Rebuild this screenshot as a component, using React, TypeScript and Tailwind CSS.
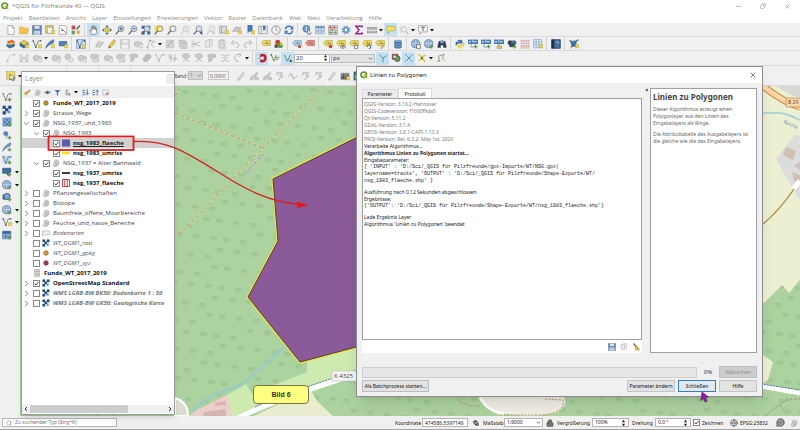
import React, { useState } from 'react';
import { Search, Lock, Globe, MessageCircleMore, Minus, X, Copy } from 'lucide-react';

const G = '#b0b0b0';

const badge = <path d="M10.5 9h5v5h-5z" fill="#f5dc5a" stroke="#b59a20" strokeWidth="0.8" />;
const greenPlus = <path d="M12 9v6M9 12h6" stroke="#5a9e3a" strokeWidth="2" />;
const lens = (fill: string, stroke = '#777') => (
  <>
    <circle cx="9.5" cy="6" r="4.6" fill={fill} stroke={stroke} strokeWidth="1.2" />
    <path d="M6 9.5 1 15" stroke={stroke === '#777' ? '#5a5a5a' : stroke} strokeWidth="1.8" />
  </>
);
const tag = (fill: string, stroke: string) => (
  <>
    <path d="M4 2.5h11v8H4L1 6.5z" fill={fill} stroke={stroke} strokeWidth="0.8" />
    <path d="M5 7.5q1.5-2.5 2 0M8.500 4v4h1.500V6M13 6q-2 0-1.500 2h1.500" fill="none" stroke="#666" strokeWidth="0.9" />
  </>
);
const blob = (
  <path d="M2 10q-1-5 3-6 3-1 5 1 4-1 5 2 0 3-4 3-2 0-3 2-3 3-6-2z" fill="#cdcdcd" stroke={G} />
);
const vee = (color: string) => (
  <>
    <path d="M2 3 6 13 10 3h4" fill="none" stroke={color} strokeWidth="1.3" />
    <circle cx="2" cy="3" r="1.4" fill={color} />
    <circle cx="6" cy="13" r="1.4" fill={color} />
    <circle cx="14" cy="3" r="1.3" fill={color} />
  </>
);
const globe = (
  <>
    <circle cx="7.5" cy="7.500" r="6.500" fill="#7ea6cf" stroke="#35557d" />
    <path d="M1 7.500h13M7.500 1v13M4 2.500q-2 5 0 10M11 2.500q2 5 0 10" fill="none" stroke="#e9f1f8" strokeWidth="0.9" />
  </>
);

const glyphs: Record<string, React.ReactNode> = {
  new: <path d="M3 1h7l3 3.500V15H3zM10 1v4h3" fill="#fff" stroke="#888" />,
  open: <path d="M1 3h5l1.500 2H14v2l1.500 0L13 14H1z" fill="#f6c04d" stroke="#d39a2a" strokeWidth="0.8" />,
  save: (
    <>
      <path d="M1 1h14v14H1z" fill="#5f87b1" stroke="#4d7093" />
      <path d="M4 1h8v5H4zM3 9h10v6H3z" fill="#dfe7ee" />
      <path d="M4 11h8M4 13h8" stroke="#8aa0b5" strokeWidth="0.8" />
    </>
  ),
  layout: (
    <>
      <path d="M1 1h12v12H1z" fill="#e9d36a" stroke="#8c8247" />
      <path d="M4 4h8v9H4z" fill="#fff" stroke="#8a8a8a" strokeWidth="0.8" />
      {badge}
    </>
  ),
  manager: (
    <>
      <path d="M2 1h9l3 3v11H2z" fill="#fff" stroke="#8a8a8a" />
      <path d="m5 5 8 8M5 9h4" stroke="#777" strokeWidth="1.500" />
    </>
  ),
  style: (
    <>
      <path d="M1 1h6v6H1z" fill="#c0504d" />
      <path d="M9 7 14 1" stroke="#444" strokeWidth="2" />
      <path d="M1 9h5v6H1z" fill="#5a9e5a" />
      <path d="M9 9h5v5H9z" fill="#e0a83a" />
    </>
  ),
  hand: (
    <path
      d="M4 15q-1-3-3-6 1-1.500 3 1V3q1-1.500 2 0v4-5.500q1-1 2 0V7 2.500q1-1 2 0V8 4.500q1-1 2 0V11q0 2-1.500 4z"
      fill="#fff" stroke="#555" strokeWidth="0.9"
    />
  ),
  panSel: (
    <>
      <path d="M8 0 11 3.500H5zM8 16l3-3.500H5zM0 8l3.500-3v6zM16 8l-3.500-3v6z" fill="#3c6898" />
      <path d="M5 5h6v6H5z" fill="#f0d640" stroke="#a8941e" />
    </>
  ),
  zoomIn: <>{lens('#d5e2f0')}<path d="M7 6h5M9.500 3.500v5" stroke="#2b5c94" strokeWidth="1.500" /></>,
  zoomOut: <>{lens('#d5e2f0')}<path d="M7 6h5" stroke="#2b5c94" strokeWidth="1.500" /></>,
  full: (
    <>
      <path d="M1 1h5v5H1zM10 1h5v5h-5zM1 10h5v5H1zM10 10h5v5h-5z" fill="#3c6898" />
      {lens('#c9dbee')}
    </>
  ),
  zoomSel: <><path d="M1 1h10v10H1z" fill="#f3e05a" />{lens('#f3e88a')}</>,
  zoomLayer: <><path d="M3 1h12v10H3z" fill="#ddd" />{lens('#f1f1f1')}</>,
  zoomNative: <>{lens('#e4e4e4', '#cacaca')}<path d="M12 10v5M15 10v5" stroke="#cacaca" /></>,
  zoomLast: <>{lens('#d5e2f0')}<path d="M15 9 10 12.500 15 16z" fill="#2b5c94" /></>,
  zoomNext: <>{lens('#e8e8e8', '#cacaca')}<path d="m10 9 5 3.500-5 3.500z" fill="#cacaca" /></>,
  mapView: <><path d="M1 2h11v11H1z" fill="#ddd" stroke="#8c8c8c" /><path d="M4 2v11" stroke="#8c8c8c" />{badge}</>,
  view3d: <><path d="M1 10 5 4h9l-2 6z" fill="#c9c9c9" stroke="#9c9c9c" />{badge}</>,
  bookmark: <><path d="M4 0h8v13l-4-3-4 3z" fill="#4679b0" />{badge}</>,
  bookmarks: <><path d="M1 2h14v12H1z" fill="#e9e9e9" stroke="#888" /><path d="M5 2v12" stroke="#888" /><path d="M8 1h4v8L10 7 8 9z" fill="#4679b0" /></>,
  clock: <><circle cx="8" cy="8" r="6.700" fill="#f2f2f2" stroke="#888" strokeWidth="1.300" /><path d="M8 3v5l3 2" fill="none" stroke="#666" /></>,
  refresh: (
    <>
      <path d="M2 7q1-5 6-5 3 0 5 2M14 9q-1 5-6 5-3 0-5-2" fill="none" stroke="#3f7cb8" strokeWidth="2.300" />
      <path d="M15 1v6H9zM1 15V9h6z" fill="#3f7cb8" />
    </>
  ),
  identify: <><circle cx="7" cy="6" r="5.500" fill="#6c98c5" stroke="#3c6898" /><path d="M7 5v4M7 2.500v1.500" stroke="#fff" strokeWidth="1.700" /><path d="m9 7 6 6-3 .3L13.500 16l-2-1-1-2L9 15z" fill="#fff" stroke="#555" strokeWidth="0.800" /></>,
  table: <><path d="M1 2h14v12H1z" fill="#dfeaf5" stroke="#7d9fc2" /><path d="M1 2h14v3H1z" fill="#5f8fc0" /><path d="M1 8h14M1 11h14M5.500 2v12M10 2v12" stroke="#7d9fc2" /></>,
  calc: <><path d="M1 1h14v14H1z" fill="#dcdcdc" stroke="#888" /><path d="M2 4h12M2 8h12M2 12h12" stroke="#777" /><path d="M4 2.500v3M10 2.500v3" stroke="#c33" strokeWidth="2" /><path d="M7 6.500v3M4 10.500v3M12 10.500v3" stroke="#5a9e3a" strokeWidth="2" /></>,
  gear: <><circle cx="8" cy="8" r="5.500" fill="none" stroke="#6c9ccc" strokeWidth="3.500" strokeDasharray="2.200 2.100" /><circle cx="8" cy="8" r="3.500" fill="#fff" stroke="#5b8fc6" strokeWidth="2.500" /></>,
  sigma: <path d="M13 4V2H3l5 6-5 6h10v-2.500" fill="none" stroke="#a3218e" strokeWidth="2.300" />,
  ruler: <><path d="M0 3h16v4H0zM0 9h16v4H0z" fill="#9a9a9a" /><path d="M2 4v2M5 4v2M8 4v2M11 4v2M14 4v2M2 11h12" stroke="#eee" /></>,
  tip: <path d="M3 2h10q2 0 2 2v3q0 2-2 2H7l-4 5V9Q1 9 1 7V4q0-2 2-2z" fill="#f4e663" stroke="#a99b34" />,
  greySearch: <><path d="M1 2h10v10H1z" fill="#ddd" /><circle cx="8" cy="7" r="4" fill="#eee" stroke="#bbb" /><path d="m11 10 4 5" stroke="#bbb" strokeWidth="2" /></>,
  text: <><path d="M1 1h14v10H6l-3 4v-4H1z" fill="#f5f5f5" stroke="#8e8e8e" /><path d="M5 3.500h6M8 3.500v6" stroke="#555" strokeWidth="1.400" /></>,

  sources: <><path d="m1 4 9-3 5 4-9 4z" fill="#e2673f" /><path d="m1 8 9-3 5 4-9 4z" fill="#e8c33c" /><path d="m1 7 5 3 8-3v5l-8 3-5-3z" fill="#3a6ea5" /></>,
  geopkg: <><path d="m1 6 7-4 7 4-7 4z" fill="#eac94a" stroke="#8f7a22" strokeWidth="0.800" /><path d="M1 6v5l7 4V10z" fill="#3c6898" /><path d="M15 6v5l-7 4V10z" fill="#53809f" />{badge}</>,
  shape: <>{vee('#666')}{badge}</>,
  shapeGreen: <>{vee('#777')}{greenPlus}</>,
  feather: <><path d="M1 15Q3 5 14 1q1 6-5 7Q5 10 1 15z" fill="#4c7db2" stroke="#2f5b8c" strokeWidth="0.800" />{badge}</>,
  featherGreen: <><path d="M1 15Q3 5 14 1q1 6-5 7Q5 10 1 15z" fill="#6f98c2" stroke="#4b739c" strokeWidth="0.800" />{greenPlus}</>,
  scratch: <><path d="M2 4h12v7H2z" fill="#4c86bd" stroke="#2f5b8c" />{badge}</>,
  virtual: <><path d="M1 1h14v14H1z" fill="#d3e2f0" stroke="#5585b5" />{vee('#3c6898')}{badge}</>,
  edits: <path d="m2 12 6-9 2 2-6 9zM7 13l6-9 2 2-6 8z" fill="#c9c9c9" stroke={G} strokeWidth="0.800" />,
  pencil: <><path d="m3 11 8-10 3 2.500-8 10z" fill="#f0c93c" stroke="#94761a" strokeWidth="0.800" /><path d="m3 11 3 2.500L2 15z" fill="#555" /></>,
  saveGrey: <><path d="M1 1h14v14H1z" fill="#d4d4d4" stroke="#bcbcbc" /><path d="M4 1h8v5H4zM3 9h10v6H3z" fill="#f1f1f1" /></>,
  blob: <>{blob}<path d="M10 9h5v5h-5z" fill="#eee" stroke={G} /></>,
  node: <><path d="M2 13 6 2l8 2-6 4 5 6" fill="none" stroke={G} strokeWidth="1.300" /><path d="M4.500 1h3v3h-3zM1 12h3v3H1z" fill={G} /></>,
  multi: <><path d="M2 2h12v12H2z" fill="#d4d4d4" stroke="#bbb" /><path d="m4 12 8-9" stroke={G} strokeWidth="2" /></>,
  trash: <path d="M2 2h9v3h3v10H5v-3H2zM5 6h9" fill="#cfcfcf" stroke={G} />,
  cut: <><path d="M15 4 5 9M15 12 5 7" stroke={G} strokeWidth="1.300" /><circle cx="3.500" cy="5.500" r="2" fill="none" stroke={G} /><circle cx="3.500" cy="10.500" r="2" fill="none" stroke={G} /></>,
  copy: <path d="M2 3h7v10H2zM6 1h7v10H9" fill="#eaeaea" stroke="#b5b5b5" />,
  paste: <path d="M3 2h10v13H3zM6 1h4v3H6zM5 7h6v6H5z" fill="#e4e4e4" stroke="#b5b5b5" />,
  undo: <path d="M6 2 2 6l4 4M2 6h7q5 0 5 4 0 3-4 4" fill="none" stroke={G} strokeWidth="1.400" />,
  redo: <path d="m10 2 4 4-4 4M14 6H7Q2 6 2 10q0 3 4 4" fill="none" stroke={G} strokeWidth="1.400" />,
  label: tag('#f4df4d', '#a08e1c'),
  diagram: <><circle cx="6" cy="5" r="4" fill="#d0392f" /><circle cx="10" cy="10" r="4.500" fill="#55a03c" /><path d="M10 10V5.500a4.500 4.500 0 0 1 4.500 4.500z" fill="#f0c93c" /><path d="M1 9h5v5H1z" fill="#444" /></>,
  labelBlue: <>{tag('#b8d1ec', '#5c85b0')}<circle cx="12" cy="12" r="2.500" fill="#c9443c" /></>,
  labelRed: tag('#ef8d84', '#b04038'),
  labelPin: <>{tag('#f4df4d', '#a08e1c')}<circle cx="12" cy="12" r="2.800" fill="#d0392f" /></>,
  labelEye: <>{tag('#f4df4d', '#a08e1c')}<ellipse cx="11" cy="12.500" rx="4" ry="2.300" fill="#fff" stroke="#445" /><circle cx="11" cy="12.500" r="1.200" fill="#235" /></>,
  labelMove: <>{tag('#f4df4d', '#a08e1c')}<path d="M9 10h5v5H9z" fill="#fff" stroke="#444" /></>,
  labelRot: <>{tag('#f4df4d', '#a08e1c')}<path d="M8 13a3 3 0 1 1 3 2.500" fill="none" stroke="#2f5b8c" strokeWidth="1.500" /></>,
  labelEdit: <>{tag('#f4df4d', '#a08e1c')}<path d="m9 15 4-6 2 1.500-4 5z" fill="#f0c93c" stroke="#777" strokeWidth="0.700" /></>,
  db: <><path d="M2 3v10q0 2 6 2t6-2V3z" fill="#44719f" /><ellipse cx="8" cy="3" rx="6" ry="2" fill="#7ea6cf" /><path d="M2 7q1 2 6 2t6-2M2 10.500q1 2 6 2t6-2" fill="none" stroke="#a9c3dd" /></>,
  globe: <>{globe}<path d="M9 9h6v6H9z" fill="#fff" stroke="#444" /></>,
  globePlus: <>{globe}{greenPlus}</>,
  binoc: <><path d="M3 3h4v3h2V3h4l2 8v3h-5v-4H6v4H1v-3z" fill="#2e3e50" /><circle cx="8" cy="4" r="3" fill="#7ea6cf" /></>,
  python: <><path d="M8 1q4 0 4 2.500V7H6Q3 7 3 10H1V6q0-2 3-2h4V3H4q0-2 4-2z" fill="#3a6ea5" /><path d="M8 15q-4 0-4-2.500V9h6q3 0 3-3h2v4q0 2-3 2H8v1h4q0 2-4 2z" fill="#f0cf45" /></>,
  html: <><path d="M0 1h16v7H0z" fill="#3f77ae" /><path d="M2 3v3M4 3v3M2 4.500h2M6 3h3M7.500 3v3M10 6V3l1.500 2L13 3v3" fill="none" stroke="#fff" strokeWidth="0.900" /><path d="M5 8v5h4" fill="none" stroke="#777" />{greenPlus}</>,
  htmlYel: <><path d="M0 1h16v7H0z" fill="#3f77ae" /><path d="M2 3v3M4 3v3M2 4.500h2M6 3h3M7.500 3v3M10 6V3l1.500 2L13 3v3" fill="none" stroke="#fff" strokeWidth="0.900" /><path d="M8 8v3" stroke="#777" /><path d="M5 11h7v4H5z" fill="#eac94a" stroke="#888" /></>,
  osm: <><circle cx="5" cy="6" r="4" fill="#33475e" /><circle cx="11" cy="6" r="4" fill="#4a6a8e" /><path d="M4 8h8v5H4z" fill="#33475e" />{greenPlus}</>,
  colorGrid: (
    <>
      <path d="M1 1h14v14H1z" fill="#f3dcdc" />
      <path d="M1 3h14M1 11h14" stroke="#e08c8c" strokeWidth="2" strokeDasharray="2 1" />
      <path d="M1 7h14" stroke="#8cb4e0" strokeWidth="2" strokeDasharray="2 1" />
      <path d="M1 14h14" stroke="#9ccf8c" strokeWidth="2" strokeDasharray="2 1" />
    </>
  ),
  grid: <><path d="M1 1h13v13H1z" fill="#eef4fa" stroke="#6c98c5" /><path d="M5 1v13M9.500 1v13M1 5h13M1 9.500h13" stroke="#6c98c5" />{badge}</>,
  book: <><path d="M1 1h14v14H1z" fill="#3c6898" stroke="#1f3854" /><path d="M1 1h4v14H1z" fill="#1f2f44" /><path d="M8 6q0-2 2-2t2 2q0 1.500-2 2.500M10 11v1.300" fill="none" stroke="#cfe0f2" strokeWidth="1.200" /></>,
  topo: <><path d="m2 3 11-1-2 10-7 1z" fill="#4c7db2" /><path d="m2 3 9 9M13 2 4 13" stroke="#2b4a69" /><circle cx="2" cy="3" r="1.500" fill="#777" /><circle cx="14" cy="2" r="1.500" fill="#777" /><circle cx="3" cy="14" r="1.500" fill="#d5b83c" />{badge}</>,

  arc: <><path d="M2 14Q2 3 14 3" fill="none" stroke="#c5c5c5" strokeWidth="1.300" /><path d="M1 12h3v3H1zM12 1h3v3h-3z" fill="#c5c5c5" /></>,
  tri: <path d="M2 2v12h12zM2 14 14 2v12" fill="#dcdcdc" stroke={G} />,
  ring: <><circle cx="6" cy="6" r="4.500" fill="#cdcdcd" stroke={G} /><circle cx="11" cy="11" r="3.500" fill="#e6e6e6" stroke={G} /></>,
  blobs: <><path d="M1 6q0-5 5-4l8 1q1 4-4 4l-6 2q-3 0-3-3z" fill="#cdcdcd" stroke={G} /><path d="M4 12q1-3 5-3h5v5H5z" fill="#dedede" stroke={G} /></>,
  hook: <path d="M1 3q7-3 13 0 1 5-4 4-2 0-2 4l-3 3q-4 0-2-5z" fill="#c4c4c4" stroke={G} />,
  pill: <path d="M2 12q-2-4 2-5 1-5 7-5 5 2 3 6-3 1-4 4-5 4-8 0z" fill="#bdbdbd" stroke={G} />,
  split: <path d="M2 2v6h5M5 2v12M11 2v12M8 9h7" fill="none" stroke={G} strokeWidth="1.500" />,
  scissor: <><ellipse cx="8" cy="4.500" rx="6" ry="3.500" fill="#ccc" stroke={G} /><path d="m3 14 8-6M13 14 5 8" stroke={G} strokeWidth="1.400" /></>,
  merge: <path d="M1 3h5l2 3 2-3h5M1 13h5l2-3 2 3h5M3 8h10" fill="none" stroke="#c0c0c0" strokeWidth="1.600" />,
  rotate: <path d="M12 3Q3 0 3 8q0 6 6 6M9 1l4 2-3 3" fill="none" stroke={G} strokeWidth="1.400" />,
  veeGrey: <>{vee('#b5b5b5')}</>,
  magnet: (
    <>
      <path d="M3 5.500 8.500 3q5 0 5 5t-5 5L4 12" fill="none" stroke="#c32026" strokeWidth="4" />
      <path d="m2 6.500 2.500-3M3 13.500l1-3" stroke="#f2f2f2" strokeWidth="2.500" />
      <path d="M1 8.500h3" stroke="#777" />
    </>
  ),
  snapV: <><path d="M2 3 6 13 10 3M9 7h6M9 10h5" fill="none" stroke="#6c8f5c" strokeWidth="1.500" /><circle cx="2" cy="3" r="1.700" fill="#6c8f5c" /></>,
  snapBlue: <><path d="M2 3 7 13 12 3" fill="none" stroke="#4b8e63" strokeWidth="1.500" /><path d="m12 10 3 4h-5z" fill="#333" /></>,
  topoEdit: <path d="M2 3 8 8l6-4M8 8v7" fill="none" stroke="#5e9c70" strokeWidth="1.600" />,
  overlap: <><path d="M2 2h9v8H2z" fill="#c04a4a" stroke="#444" /><circle cx="10" cy="9" r="4.500" fill="#6a9a5a" stroke="#333" /><circle cx="6" cy="6" r="2" fill="#eee" /></>,
  extent: <><path d="M2 5q5-5 9 0t2 8q-6 2-9-3z" fill="#444" /><path d="m3 3 10 10M13 3 4 12M3 8h10" stroke="#ddd" strokeWidth="0.900" /></>,
  cross: <path d="m2 2 12 12M14 2 2 14" stroke="#59977a" strokeWidth="1.500" />,
  crossYel: <><path d="M2 2q5 3 6 6 2-4 6-5M8 8l5 6M8 8l-5 5" fill="none" stroke="#dcc22e" strokeWidth="2.200" /><circle cx="8" cy="8" r="1.500" fill="#444" /></>,
  trace: <path d="M2 13h4L4 5l9-3-3 6 4 4" fill="none" stroke="#7ca06a" strokeWidth="1.500" />,
  select: <><path d="M1 1h13v13H1z" fill="#f4e24c" stroke="#777" strokeDasharray="2 1" /><path d="m6 5 9 6-4 .500 2 4-2 .500-2-4-3 2z" fill="#fff" stroke="#333" strokeWidth="0.900" /></>,
  pen: <path d="m2 13 9-11 3 2-9 11zM2 14h4" fill="#d6d6d6" stroke="#bcbcbc" />,
  brush: <path d="M2 14q0-5 4-6l7-6 1 2-5 7q-2 4-7 3zM10 10h5v4h-5z" fill="#cbcbcb" stroke={G} />,
  wave: <path d="M1 9Q4 1 7 8t8-1M5 3l4 11" fill="none" stroke={G} strokeWidth="1.400" />,
  sweep: <path d="M3 3h9l-5 5h6l-8 6M3 3v4" fill="none" stroke={G} strokeWidth="1.600" />,
  hist: <><path d="M1 3h14v11H1z" fill="#8c8c8c" /><path d="M3 13V8M6 13V5M9 13V9M12 13V6" stroke="#3f3f3f" strokeWidth="1.600" />{badge}</>,
  histGreen: <><path d="M1 1h14v14H1z" fill="#2e6e5c" /><path d="M4 13V6M8 13V3M12 13V8" stroke="#7bc2a2" strokeWidth="1.500" /></>,

  raster: <><path d="M1 1h14v14H1z" fill="#d7e3ee" /><path d="M1 1h5v5H1zM10 1h5v5h-5zM5 5h5v5H5zM1 10h5v5H1z" fill="#27496d" /><path d="M9 9h4v4H9z" fill="#6690ba" /></>,
  mesh: <><path d="M1 1h14v14H1z" fill="#4c7db2" /><path d="m1 8 7-7 7 7-7 7zM1 1l14 14M15 1 1 15" fill="none" stroke="#b9d0e6" />{greenPlus}</>,
  comma: <><path d="M4 2q6-1 6 4 0 5-6 8 3-3 3-5-5 1-5-3 0-3 2-4z" fill="#5b89b8" />{greenPlus}</>,
  spatial: <><path d="M1 1h12v12H1z" fill="#c3d5e6" />{vee('#5780a8')}{greenPlus}</>,
  post: <><path d="M1 2h13v7l-4 1v4L7 10H1z" fill="#3f6e9e" stroke="#294d72" />{greenPlus}</>,
  ora: <><path d="M1 4h12v8H1z" fill="#35587c" /><circle cx="8" cy="7" r="5" fill="#7ea6cf" stroke="#27496d" />{greenPlus}</>,
  tableBlue: <><path d="M1 2h13v12H1z" fill="#8fb3d6" stroke="#3c6898" /><path d="M1 2h13v4H1z" fill="#3c6898" /><path d="M1 10h13M6 6v8" stroke="#3c6898" />{greenPlus}</>,

  group: <path d="M5 4q3-4 5-1 4 0 4 4t-3 7l-7 1q-3-2-1-4 2-2 2-7zM8 5v8M11 6l-2 7" fill="#d9d9d9" stroke="#8a8a8a" />,
  eye: <><path d="M1 8q7-7 14 0-7 6-14 0z" fill="#bcd" stroke="#345" /><circle cx="8" cy="8" r="2.500" fill="#234" /></>,
  filter: <path d="M1 2h14L9.500 8v7h-3V8z" fill="#4679b0" />,
  expr: <><path d="M10 3Q4 1 5 5q0 3 4 3-6 0-5 4 1 3 6 1" fill="none" stroke="#9b5a9b" strokeWidth="1.700" />{greenPlus}</>,
  expand: <path d="M1 3h6M1 8h6M1 13h6M12 1v11M9 9l3 4 3-4" fill="none" stroke="#3c6898" strokeWidth="1.900" />,
  collapse: <path d="M1 3h6M1 8h6M1 13h6M12 15V3M9 6l3-4 3 4" fill="none" stroke="#3c6898" strokeWidth="1.900" />,
  remove: <><path d="M2 2h12v12H2z" fill="#eee" stroke="#999" /><path d="M9 11h6" stroke="#c33" strokeWidth="2.500" /></>,
  paint: <><path d="m8 8 6-6" stroke="#8a5a2c" strokeWidth="2.400" /><path d="M1 9q4-4 8-2 1 4-4 7-3-1-4-5z" fill="#e6b53c" stroke="#a97b1a" /></>,
  broom: <><path d="M3 1 8 7" stroke="#8a5a2c" strokeWidth="2.400" /><path d="M6 8q3-3 5-1l4 7H8z" fill="#e6b53c" stroke="#a97b1a" /></>,
  doc: <path d="M3 1h10v14H3zM6 1v14M10 1v14M3 5h10M3 10h10" fill="#e4e4e4" stroke="#999" />,
  pointOrange: <circle cx="8" cy="8" r="4.500" fill="#e39a2d" stroke="#7c5312" strokeWidth="1.300" />,
  pointOlive: <circle cx="8" cy="8" r="4.500" fill="#c59a33" stroke="#6b5317" strokeWidth="1.300" />,
  pointRed: <circle cx="8" cy="8" r="4.500" fill="#a0414c" stroke="#5c2129" strokeWidth="1.300" />,
  fillBlue: <path d="M0 1h16v14H0z" fill="#5c59ae" />,
  lineYellow: <path d="M0 8h16" stroke="#f6e312" strokeWidth="5" />,
  lineBlack: <path d="M0 8h16" stroke="#222" strokeWidth="3.500" />,
  fillRed: <path d="M1 1h14v14H1zM5.500 1v14M10.500 1v14" fill="#fff" stroke="#b3262e" strokeWidth="1.700" />,
  polyGrey: <path d="M1 4h14v7H7l-3 3H1z" fill="#eee" stroke="#999" />,
};

const Glyph = ({ name, className = 'size-[10px]' }: { name: string; className?: string }) => (
  <svg viewBox="0 0 16 16" fill="none" aria-hidden="true" className={`shrink-0 ${className}`}>
    {glyphs[name]}
  </svg>
);

const Caret = () => (
  <svg viewBox="0 0 6 6" className="w-[6px] h-[6px] shrink-0" aria-hidden="true">
    <path d="M1 2h4L3 4.500z" fill="#111" />
  </svg>
);

const Sep = () => <span className="w-[5px] self-stretch shrink-0 flex justify-center"><span className="w-px bg-[#d4d4d4]" /></span>;

// "|" is a separator, "v" a drop-down caret, a leading "*" marks a pressed tool
const Tools = ({ items }: { items: string[] }) => (
  <>
    {items.map((item, index) => {
      if (item === '|') return <Sep key={index} />;
      if (item === 'v') return <Caret key={index} />;
      const active = item.startsWith('*');
      const name = item.replace('*', '');
      return (
        <button
          key={index}
          type="button"
          aria-label={name}
          className={`w-[13px] h-[13px] shrink-0 flex items-center justify-center ${active ? 'bg-[#c4e0f5]' : ''}`}
        >
          <Glyph name={name} />
        </button>
      );
    })}
  </>
);

const fileTools = ['new', 'open', 'save', 'layout', 'manager', 'style', '|', '*hand', 'panSel', 'zoomIn', 'zoomOut', 'full', 'zoomSel', 'zoomLayer', 'zoomNative', 'zoomLast', 'zoomNext', 'mapView', 'view3d', 'bookmark', 'bookmarks', 'clock', 'refresh', '|', 'identify', 'table', 'calc', 'gear', 'sigma', 'ruler', 'v', '*tip', 'greySearch', 'v', 'text', 'v'];
const editTools = ['sources', 'geopkg', 'shape', 'feather', 'scratch', '|', 'virtual', '|', 'edits', 'pencil', 'saveGrey', 'blob', 'node', 'v', 'multi', 'trash', 'cut', 'copy', 'paste', 'undo', 'redo', '|', 'label', 'diagram', '|', 'labelBlue', 'labelRed', '|', 'labelPin', 'labelEye', 'labelMove', 'labelRot', 'labelEdit', '|', 'db', '|', 'globe', 'globePlus', 'binoc', '|', 'python', 'html', 'html', 'htmlYel', 'osm', 'colorGrid', 'grid', '|', 'book', '|', 'topo'];
const digitizeTools = ['arc', 'tri', 'blob', 'v', 'blob', 'ring', 'blob', 'blobs', 'blob', 'blobs', 'hook', 'pill', 'veeGrey', 'split', 'scissor', 'scissor', 'hook', 'merge', 'rotate', 'v', '|'];
const sideTools = ['shapeGreen', 'raster', 'mesh', 'comma', 'featherGreen', 'spatial', 'post', 'globePlus', 'ora', 'globePlus', 'shape', 'tableBlue'];
const sideCarets = [6, 7, 9, 10];

const menu = ['Projekt', 'Bearbeiten', 'Ansicht', 'Layer', 'Einstellungen', 'Erweiterungen', 'Vektor', 'Raster', 'Datenbank', 'Web', 'Netz', 'Verarbeitung', 'Hilfe'];

const Logo = ({ className }: { className: string }) => (
  <svg viewBox="0 0 16 16" className={className} aria-hidden="true">
    <circle cx="7.500" cy="7.500" r="5.500" fill="none" stroke="#5f9a2b" strokeWidth="3.400" />
    <path d="m8 8 3 0 4.500 4.500-2 2.500L8 10.500z" fill="#7ab52f" stroke="#fff" strokeWidth="0.500" />
    <path d="M7 7h3v3H7z" fill="#e8a93a" />
  </svg>
);

const CheckBox = ({ checked, label, id }: { checked: boolean; label: string; id?: string }) => {
  const [on, setOn] = useState(checked);
  return (
    <span className="grid size-[7px] shrink-0">
      <input
        id={id}
        type="checkbox"
        aria-label={id ? undefined : label}
        checked={on}
        onChange={() => setOn(!on)}
        className="col-start-1 row-start-1 appearance-none size-[7px] border border-[#888] bg-white"
      />
      {on && (
        <svg viewBox="0 0 7 7" className="col-start-1 row-start-1 size-[7px] pointer-events-none" aria-hidden="true">
          <path d="M1.700 3.500 3 5l2.500-3" fill="none" stroke="#333" strokeWidth="0.900" />
        </svg>
      )}
    </span>
  );
};

type Layer = {
  name: string;
  icon: string;
  level: number;
  open?: boolean;
  checked?: boolean;
  look?: 'bold' | 'italic' | 'boldItalic' | 'selected';
};

const layers: Layer[] = [
  { name: 'Funde_WT_2017_2019', icon: 'pointOlive', level: 0, checked: true, look: 'bold' },
  { name: 'Strasse_Wege', icon: 'group', level: 0, open: false, checked: true },
  { name: 'NSG_1937_und_1983', icon: 'group', level: 0, open: true, checked: true },
  { name: 'NSG_1983', icon: 'group', level: 1, open: true, checked: true },
  { name: 'nsg_1983_flaeche', icon: 'fillBlue', level: 2, checked: true, look: 'selected' },
  { name: 'nsg_1983_umriss', icon: 'lineYellow', level: 2, checked: true, look: 'bold' },
  { name: 'NSG_1937 = Alter Bannwald', icon: 'group', level: 1, open: true, checked: true },
  { name: 'nsg_1937_umriss', icon: 'lineBlack', level: 2, checked: true, look: 'bold' },
  { name: 'nsg_1937_flaeche', icon: 'fillRed', level: 2, checked: true, look: 'bold' },
  { name: 'Pflanzengesellschaften', icon: 'group', level: 0, open: false, checked: false },
  { name: 'Biotope', icon: 'group', level: 0, open: false, checked: false },
  { name: 'Baumfreie_offene_Moorbereiche', icon: 'group', level: 0, open: false, checked: false },
  { name: 'Feuchte_und_nasse_Bereiche', icon: 'group', level: 0, open: false, checked: false },
  { name: 'Bodenarten', icon: 'polyGrey', level: 0, open: false, checked: false, look: 'italic' },
  { name: 'WT_DGM1_rast', icon: 'raster', level: 0, checked: false, look: 'italic' },
  { name: 'WT_DGM1_gpkg', icon: 'pointOrange', level: 0, checked: false, look: 'italic' },
  { name: 'WT_DGM1_xyz', icon: 'pointRed', level: 0, checked: false, look: 'italic' },
  { name: 'Funde_WT_2017_2019', icon: 'doc', level: 0, look: 'bold' },
  { name: 'OpenStreetMap Standard', icon: 'raster', level: 0, open: false, checked: true, look: 'bold' },
  { name: 'WMS LGRB-BW BK50: Bodenkarte 1 : 50', icon: 'raster', level: 0, open: false, checked: false, look: 'boldItalic' },
  { name: 'WMS LGRB-BW GK50: Geologische Karte', icon: 'raster', level: 0, open: false, checked: false, look: 'boldItalic' },
];

const looks = {
  plain: 'text-[#444]',
  bold: 'font-bold text-[#111]',
  selected: 'font-bold text-[#222] underline',
  italic: 'italic text-[#555]',
  boldItalic: 'italic font-bold text-[#777]',
};
const indents = ['pl-0', 'pl-[10px]', 'pl-[20px]'];

const LayerPanel = () => (
  <section className="absolute top-[71px] left-[21px] bottom-[15px] w-[154px] flex flex-col bg-white border border-[#9a9a9a] shadow-md">
    <header className="h-[14px] shrink-0 flex items-center justify-between">
      <h2 className="pl-[3px] text-[7px] leading-[10px] text-[#888]">Layer</h2>
      <button type="button" aria-label="Panel" className="w-[8px] h-[10px] bg-[#ececec]" />
    </header>
    <div className="h-[12px] shrink-0 flex items-center gap-[2px] pl-px bg-[#f0f0f0]">
      {['paint', 'group', 'eye', 'filter', 'expr', 'v', 'expand', 'collapse', 'remove'].map((name) =>
        name === 'v' ? <Caret key={name} /> : (
          <button key={name} type="button" aria-label={name} className="w-[8px] h-[8px] flex items-center justify-center">
            <Glyph name={name} className="size-[7px]" />
          </button>
        )
      )}
    </div>
    <ul className="flex-1 min-h-0 overflow-hidden text-[6px] leading-[10px]">
      {layers.map((layer, index) => (
        <li
          key={index}
          className={`h-[10px] flex items-center ${indents[layer.level]} ${layer.look === 'selected' ? 'bg-[#d2d2d2]' : ''}`}
        >
          <span className="w-[11px] shrink-0 pl-[2px]">
            {layer.open !== undefined && (
              <svg viewBox="0 0 6 6" className="size-[5px]" aria-hidden="true">
                <path d={layer.open ? 'M0 1.500 3 4.500 6 1.500' : 'M1.500 0 4.500 3 1.500 6'} fill="none" stroke="#666" strokeWidth="1" />
              </svg>
            )}
          </span>
          {layer.checked !== undefined && (
            <span className="w-[9px] shrink-0"><CheckBox checked={layer.checked} label={layer.name} /></span>
          )}
          <Glyph name={layer.icon} className="size-[8px]" />
          <span className={`pl-[3px] whitespace-nowrap ${looks[layer.look ?? 'plain']}`}>{layer.name}</span>
        </li>
      ))}
    </ul>
    <div className="h-[8px] mb-px shrink-0 flex items-center bg-[#f0f0f0]">
      <svg viewBox="0 0 8 8" className="size-[8px]" aria-hidden="true"><path d="M5 2 3 4l2 2" fill="none" stroke="#333" /></svg>
      <span className="flex-1 flex h-full"><span className="w-[72%] bg-[#cdcdcd]" /></span>
      <svg viewBox="0 0 8 8" className="size-[8px]" aria-hidden="true"><path d="m3 2 2 2-2 2" fill="none" stroke="#333" /></svg>
    </div>
  </section>
);

// woodland symbols, scattered on a loose grid
const trees = Array.from({ length: 22 * 50 }, (_, i) => {
  const row = Math.floor(i / 50);
  const col = i % 50;
  return { x: 22 + col * 16 + ((row * 7) % 13) + ((col * 5) % 4), y: 91 + row * 16 + ((col * 11 + row * 3) % 9) };
});

const MapCanvas = () => (
  <svg viewBox="20 86 780 330" preserveAspectRatio="xMinYMin slice" className="flex-1 min-w-0 h-full" aria-label="Karte">
    <rect x="20" y="86" width="780" height="330" fill="#acd29f" />
    <g stroke="#92bb8c" strokeWidth="0.800" fill="none">
      {trees.map((t, i) => (
        <path key={i} d={`M${t.x} ${t.y}q-2-.5-1.500-2t2-.5 0 3l-1 1M${t.x + 3} ${t.y}q-2-.5-1.500-2t2-.5 0 3l-1 1`} />
      ))}
    </g>

    <path d="M360 347 307 362v10l-55 22-6-10-19 11-5 21h20l118-41z" fill="#cdebb0" />
    <path d="m227 395-28 14-10 7h43z" fill="#eccfcb" />
    <path d="m215 403 10-2 1 4-11 1zM204 412l22-3v7h-23z" fill="#d6b5b0" />
    <path d="m254 416 56-27 7 12 16 15z" fill="#e9edcd" />
    <path d="M175 398q13 4 13 18h-13z" fill="#dcdcd0" stroke="#fff" strokeWidth="2" />
    <path d="M191 411q14-12 30-19 20-4 35-20l30-26" fill="none" stroke="#9dcdc0" strokeWidth="3" />
    <path d="M238 418q40-20 122-45" fill="none" stroke="#fff" strokeWidth="5" />
    <path d="M255 407q20-10 105-38" fill="none" stroke="#4c6ca8" strokeWidth="1" strokeDasharray="2 1" />

    <g fill="none">
      <path d="m324 86-61 62-75 78q-6 6-13 9M175 113l88 35M175 96l6-10" stroke="#d6dcae" strokeWidth="1.500" />
      <path d="m324 86-61 62-75 78q-6 6-13 9M175 113l88 35M175 96l6-10" stroke="#b0985a" strokeWidth="1" strokeDasharray="4 2" />
    </g>
    <text x="247" y="174" transform="rotate(-47 247 174)" fontSize="5" fill="#777" stroke="#cfe0c4" strokeWidth="1" paintOrder="stroke">Feenstraße</text>

    <path d="m420 106-147 73 5 62-30 56 52 65 120-32z" fill="#8b5a99" stroke="#f0ea3c" strokeWidth="3" />
    <path d="m420 106-147 73 5 62-30 56 52 65 120-32z" fill="#8b5a99" stroke="#5a3c2c" strokeWidth="1" />

    <rect x="332" y="371" width="26" height="10" fill="#f5f5f5" stroke="#bbb" strokeWidth="0.600" />
    <text x="334" y="378" fontSize="6" fill="#444">K 4325</text>

    <path d="M480 397q10 12 25 17 30 4 50-1 14-6 9-16z" fill="#f0ede4" />
    <path d="M480 397q6 13 24 17" fill="none" stroke="#fff" strokeWidth="3" />
    <path d="M458 400q10 7 22 6M500 415h38q28-1 25-15l-20-1" fill="none" stroke="#b0985a" strokeDasharray="2 1.500" />

    <path d="M763 86h37v194l-11 13-7-8-19 19z" fill="#ecefd2" />
    <path d="M763 86q20 16 37 21" fill="none" stroke="#c4873c" strokeWidth="7" />
    <path d="M763 86q20 16 37 21" fill="none" stroke="#fbd6a4" strokeWidth="5" />
    <path d="M776 86h24v12q-12-3-24-12z" fill="#d8d8d4" />
    <path d="M763 113h18q10 2 19 7" fill="none" stroke="#98cfdb" strokeWidth="1.500" />
    <text x="783" y="123" transform="rotate(23 783 123)" fontSize="5" fill="#5c86b5">Reiche</text>
    <path d="m795 135 5 1v64l-6-9-18-32z" fill="#dcdcdc" />
    <path d="m786 147 10 4-3 9-10-5zM794 166l6-4v8zM792 172l8 3v9l-6-4z" fill="#cfbfb5" />
    <path d="m800 181-7 8" stroke="#fff" strokeWidth="5" />
    <path d="M794 189q-15 22-31 35" fill="none" stroke="#a8883a" strokeWidth="1.300" />
    <rect x="786" y="98" width="20" height="9" rx="1" fill="#f5d8a8" stroke="#a8793c" strokeWidth="0.600" />
    <text x="788" y="104" fontSize="5" fill="#5c4420">B 29</text>
    <path d="m763 355 10 7-5 18-5 3z" fill="#ecefd2" />
    <path d="m755 385 45 8" stroke="#fff" strokeWidth="5" />
    <path d="m755 383 45 7" stroke="#4c6ca8" strokeDasharray="2 1" />
    <path d="m765 416 18-14 9-3M780 405l8 11M785 399h15" fill="none" stroke="#9b9a70" strokeDasharray="3 1.500" />
  </svg>
);

const versions = ['QGIS-Version: 3.16.2-Hannover', 'QGIS-Codeversion: f1660f9da5', 'Qt-Version: 5.11.2', 'GDAL-Version: 3.1.4', 'GEOS-Version: 3.8.1-CAPI-1.13.3', 'PROJ-Version: Rel. 6.3.2, May 1st, 2020'];

const pushButton = 'h-[12px] shrink-0 border text-[5px] leading-[10px] whitespace-nowrap';

const AlgorithmDialog = () => (
  <section
    role="dialog"
    aria-label="Linien zu Polygonen"
    className="absolute top-[66px] left-[356px] right-[37px] bottom-[33px] flex flex-col bg-[#f0f0f0] border border-[#8c8c8c] shadow-lg font-['Noto_Sans',sans-serif]"
  >
    <header className="h-[16px] shrink-0 flex items-center bg-white pl-[3px] pr-[5px]">
      <Logo className="size-[8px]" />
      <h2 className="pl-[2px] flex-1 text-[6px] leading-[10px] text-[#222]">Linien zu Polygonen</h2>
      <button type="button" aria-label="Fenster zu"><X className="size-[8px]" strokeWidth={1.5} /></button>
    </header>
    <div className="flex-1 min-h-0 flex pt-[5px] px-[5px]">
      <div className="flex-1 min-w-0 flex flex-col">
        <div role="tablist" className="h-[10px] shrink-0 flex items-end text-[5px] leading-[8px] text-[#222]">
          <button role="tab" aria-selected="false" type="button" className="w-[36px] h-[9px] border border-b-0 border-[#dcdcdc] bg-[#ececec]">Parameter</button>
          <button role="tab" aria-selected="true" type="button" className="w-[34px] h-[10px] border border-b-0 border-[#dcdcdc] bg-white">Protokoll</button>
        </div>
        <div className="flex-1 min-h-0 overflow-hidden border border-[#a0a0a0] bg-white pt-[2px] pl-px text-[5px] leading-[7px] text-[#222]">
          {versions.map((line) => <p key={line} className="text-[#7b7b7b]">{line}</p>)}
          <p>Verarbeite Algorithmus...</p>
          <p className="font-bold">Algorithmus Linien zu Polygonen startet...</p>
          <p>Eingabeparameter:</p>
          <div className="font-['Liberation_Mono',monospace] whitespace-nowrap">
            <p>{"{ 'INPUT' : 'D:/Sci/_QGIS für Pilzfreunde/gpx-Importe/WT/NSG.gpx|"}</p>
            <p>{"layername=tracks', 'OUTPUT' : 'D:/Sci/_QGIS für Pilzfreunde/Shape-Exporte/WT/"}</p>
            <p>{"nsg_1983_flaeche.shp' }"}</p>
          </div>
          <p className="pt-1">Ausführung nach 0.12 Sekunden abgeschlossen</p>
          <p>Ergebnisse:</p>
          <p className="font-['Liberation_Mono',monospace] whitespace-nowrap">{"{'OUTPUT': 'D:/Sci/_QGIS für Pilzfreunde/Shape-Exporte/WT/nsg_1983_flaeche.shp'}"}</p>
          <p className="pt-1">Lade Ergebnis Layer</p>
          <p>Algorithmus 'Linien zu Polygonen' beendet</p>
        </div>
        <div className="h-[13px] shrink-0 flex items-center justify-end gap-[4px] pr-[2px] bg-white">
          <button type="button" aria-label="Protokoll speichern"><Glyph name="save" className="size-[8px]" /></button>
          <button type="button" aria-label="Protokoll kopieren"><Glyph name="copy" className="size-[8px]" /></button>
          <button type="button" aria-label="Protokoll leeren"><Glyph name="broom" className="size-[8px]" /></button>
        </div>
      </div>
      <svg viewBox="0 0 8 8" className="size-[8px] shrink-0" aria-hidden="true"><path d="m5.500 .5v3L3.500 2z" fill="#111" /></svg>
      <aside className="w-[107px] shrink-0 border border-[#a0a0a0] bg-white px-[2px] pt-[3px] text-[#666]">
        <h3 className="font-bold text-[8px] leading-[10px] text-[#444] whitespace-nowrap">Linien zu Polygonen</h3>
        <p className="pt-[4px] text-[5px] leading-[7px]">Dieser Algorithmus erzeugt einen<br />Polygonlayer aus den Linien des<br />Eingabelayers als Ringe.</p>
        <p className="pt-[4px] text-[5px] leading-[7px]">Die Attributtabelle des Ausgabelayers ist<br />die gleiche wie die des Eingabelayers.</p>
      </aside>
    </div>
    <footer className="shrink-0 px-[5px] pt-[13px] pb-[4px] flex flex-col gap-[2px]">
      <div className="flex items-center gap-[2px]">
        <div role="progressbar" aria-valuenow={0} aria-label="Fortschritt" className="flex-1 h-[11px] border border-[#cfcfcf] bg-[#e6e6e6]" />
        <span className="w-[18px] text-center text-[6px] leading-[8px] text-[#333]">0%</span>
        <button type="button" disabled className={`${pushButton} w-[38px] border-[#bfbfbf] bg-[#cccccc] text-[#8c8c8c]`}>Abbrechen</button>
      </div>
      <div className="flex items-center gap-[2px] text-[#111]">
        <button type="button" className={`${pushButton} w-[67px] border-[#bcbcbc] bg-[#e3e3e3]`}>Als Batchprozess starten...</button>
        <span className="flex-1" />
        <button type="button" className={`${pushButton} w-[48px] border-[#c4c4c4] bg-[#e3e3e3]`}>Parameter ändern</button>
        <button type="button" className={`${pushButton} w-[38px] mx-px border-[#2f7fc8] bg-[#e3e8ee]`}>Schließen</button>
        <button type="button" className={`${pushButton} w-[38px] border-[#c4c4c4] bg-[#e3e3e3]`}>Hilfe</button>
      </div>
    </footer>
  </section>
);

const Spin = () => (
  <svg viewBox="0 0 5 10" className="w-[5px] h-[8px] shrink-0" aria-hidden="true">
    <path d="M.5 4 2.500 1 4.500 4zM.5 6l2 3 2-3z" fill="#222" />
  </svg>
);

const field = 'h-[9px] border border-[#b5b5b5] bg-white px-[2px] text-[5px] leading-[7px] text-[#222]';

const StatusBar = () => (
  <footer className="h-[14px] shrink-0 flex items-center bg-[#f0f0f0] border-b border-[#a5a5a5] pl-[2px] text-[5px] leading-[8px] text-[#222] whitespace-nowrap font-['Noto_Sans',sans-serif]">
    <label className="w-[115px] h-[9px] flex items-center border border-[#b5b5b5] bg-white pl-[3px]">
      <Search className="size-[6px] text-[#777]" />
      <input aria-label="Suche" placeholder="Zu suchender Typ (Strg+K)" className="flex-1 min-w-0 pl-[3px] text-[5px] leading-[7px] placeholder:text-[#777]" />
    </label>
    <span className="flex-1" />
    <label htmlFor="coord" className="w-[27px]">Koordinate</label>
    <input id="coord" defaultValue="474586,5397146" className={`${field} w-[46px]`} />
    <span className="w-[15px] flex justify-center"><Glyph name="extent" className="size-[8px]" /></span>
    <label htmlFor="scale" className="w-[21px]">Maßstab</label>
    <span className="w-[39px] grid items-center">
      <select id="scale" className={`${field} appearance-none col-start-1 row-start-1`}><option>1:6000</option></select>
      <svg viewBox="0 0 6 6" className="size-[5px] mr-[2px] justify-self-end col-start-1 row-start-1 pointer-events-none" aria-hidden="true"><path d="m1 2 2 2 2-2" fill="none" stroke="#555" /></svg>
    </span>
    <span className="w-[14px] flex justify-center"><Lock className="size-[8px] text-[#444]" fill="#777" /></span>
    <label htmlFor="magnifier" className="w-[35px]">Vergrößerung</label>
    <span className={`${field} w-[37px] flex items-center`}><input id="magnifier" defaultValue="100%" className="flex-1 min-w-0" /><Spin /></span>
    <label htmlFor="rotation" className="w-[26px] pl-[3px]">Drehung</label>
    <span className={`${field} w-[36px] flex items-center`}><input id="rotation" defaultValue="0,0 °" className="flex-1 min-w-0" /><Spin /></span>
    <span className="pl-[2px] pr-[2px]"><CheckBox id="render" checked label="Zeichnen" /></span>
    <label htmlFor="render" className="w-[28px]">Zeichnen</label>
    <Globe className="size-[8px] text-[#555]" />
    <span className="w-[38px] pl-[2px]">EPSG:25832</span>
    <MessageCircleMore className="size-[9px] text-[#444]" fill="#999" />
    <span className="w-[13px] mr-[2px] flex justify-end"><Glyph name="group" className="size-[8px]" /></span>
  </footer>
);

const toolbar = 'shrink-0 flex items-center pl-[4px] border-b border-[#dadada] overflow-hidden';

const App = () => {
  return (
    <div className="relative h-screen overflow-hidden flex flex-col bg-[#f0f0f0] font-['Open_Sans','Noto_Sans',sans-serif]">
      <header className="h-[12px] shrink-0 flex items-center bg-white pl-px pr-[9px] text-[#888]">
        <Logo className="size-[8px]" />
        <h1 className="flex-1 pl-[3px] font-['Noto_Sans',sans-serif] text-[6px] leading-[10px]">*QGIS für Pilzfreunde 40 — QGIS</h1>
        <div className="flex items-center gap-[18px]">
          <button type="button" aria-label="Minimieren"><Minus className="size-[7px]" /></button>
          <button type="button" aria-label="Verkleinern"><Copy className="size-[6px] -scale-x-100" /></button>
          <button type="button" aria-label="Beenden"><X className="size-[7px]" /></button>
        </div>
      </header>
      <nav className="h-[11px] shrink-0 flex items-center gap-[6px] bg-white pl-[3px] text-[6px] leading-[10px] text-[#8a8a8a]">
        {menu.map((entry) => <button key={entry} type="button">{entry}</button>)}
      </nav>

      <div className={`${toolbar} h-[14px]`}><Tools items={fileTools} /></div>
      <div className={`${toolbar} h-[14px]`}><Tools items={editTools} /></div>
      <div className={`${toolbar} h-[15px]`}>
        <Tools items={digitizeTools} />
        <Tools items={['*magnet', 'snapV', '*snapBlue']} />
        <span className="w-[36px] h-[9px] flex items-center border border-[#b5b5b5] bg-white px-px">
          <input aria-label="Toleranz" defaultValue="20" className="flex-1 min-w-0 text-[6px] leading-[7px] text-[#222]" />
          <Spin />
        </span>
        <span className="w-[44px] mx-px grid items-center">
          <select aria-label="Einheit" className="col-start-1 row-start-1 appearance-none h-[9px] border border-[#bdbdbd] bg-[#e3e3e3] px-px text-[6px] leading-[7px] text-[#333]"><option>px</option></select>
          <svg viewBox="0 0 6 6" className="size-[5px] mr-[2px] justify-self-end col-start-1 row-start-1 pointer-events-none" aria-hidden="true"><path d="m1 2 2 2 2-2" fill="none" stroke="#555" /></svg>
        </span>
        <Tools items={['*topoEdit', 'overlap', '*cross', 'crossYel', 'v', 'trace']} />
      </div>
      <div className={`${toolbar} h-[20px]`}>
        <Tools items={['select', 'v']} />
        <span className="w-[151px] shrink-0 self-stretch flex justify-center gap-[27px] pt-px">
          <Sep /><Sep /><Sep />
        </span>
        <label htmlFor="band" className="w-[14px] shrink-0 text-[5px] leading-[8px] text-[#333]">Band:</label>
        <span className="w-[15px] shrink-0 grid items-center">
          <select id="band" className="col-start-1 row-start-1 appearance-none h-[9px] border border-[#bdbdbd] bg-[#d6d6d6] px-px text-[5px] leading-[7px] text-[#777]"><option>1</option></select>
          <svg viewBox="0 0 6 6" className="size-[5px] mr-px justify-self-end col-start-1 row-start-1 pointer-events-none" aria-hidden="true"><path d="m1 2 2 2 2-2" fill="none" stroke="#777" /></svg>
        </span>
        <input aria-label="Wert" defaultValue="0,0000" className="w-[21px] mx-[5px] h-[9px] border border-[#c6c6c6] bg-[#f4f4f4] px-px text-[5px] leading-[7px] text-[#555]" />
        <Tools items={['pen', 'brush', 'brush', 'sweep', 'wave', 'sweep', 'sweep', 'pen', 'hist', 'histGreen']} />
      </div>

      <main className="flex-1 min-h-0 flex">
        <div className="w-[20px] h-[154px] shrink-0 flex flex-col justify-between pt-[6px] pl-[2px]">
          {sideTools.map((name, index) => (
            <div key={index} className="h-[10px] shrink-0 flex items-center gap-[2px]">
              <button type="button" aria-label={name} className="w-[10px]"><Glyph name={name} /></button>
              {sideCarets.includes(index) && <Caret />}
            </div>
          ))}
        </div>
        <MapCanvas />
      </main>
      <StatusBar />

      <LayerPanel />
      <AlgorithmDialog />

      <p className="absolute left-[253px] bottom-[26px] w-[56px] h-[19px] rounded-[4px] border border-[#77774a] bg-[#ffff80] text-center font-['Liberation_Sans',sans-serif] font-bold text-[7px] leading-[17px] text-[#333]">Bild 6</p>

      {/* annotation arrow and cursor */}
      <svg viewBox="0 0 800 430" preserveAspectRatio="xMinYMin slice" className="absolute inset-0 size-full pointer-events-none" aria-hidden="true">
        <rect x="48.500" y="136.500" width="85" height="13.500" fill="none" stroke="#e01b1b" strokeWidth="1.800" />
        <path d="M134 141.500c36-2 55 13 85 31 28 18 50 29 80 32" fill="none" stroke="#d8201c" strokeWidth="1.300" />
        <path d="m308 205.500-11.500 2.500 1.500-3.200-1-3.200z" fill="#ee1515" />
        <path d="m702 392 6.500 5-3 .5 1.500 4-2 .5-1.500-3.500-2.500 2z" fill="#8a1fb0" stroke="#4c1062" strokeWidth="0.600" />
      </svg>
    </div>
  );
};

export default App;
